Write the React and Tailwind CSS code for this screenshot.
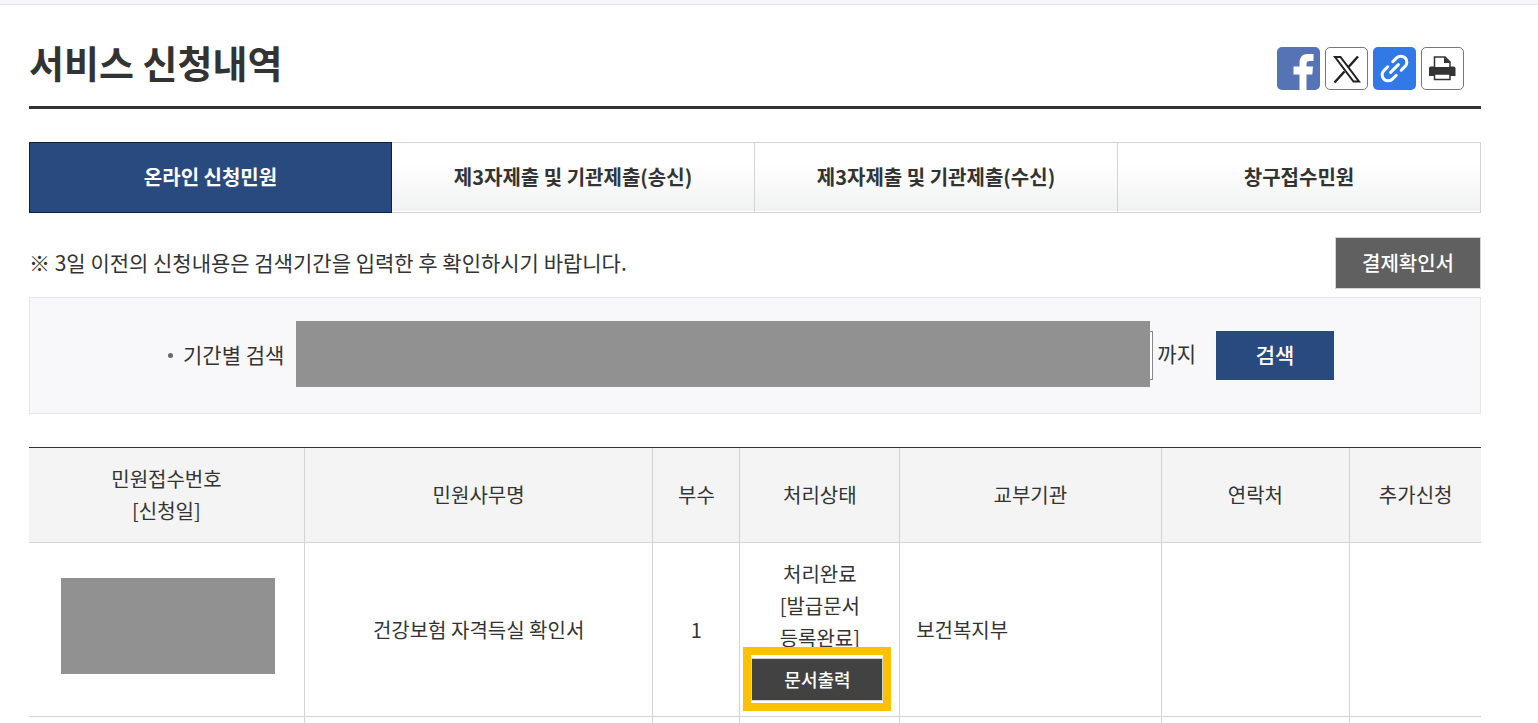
import { useState } from "react";

const tabs = [
  "온라인 신청민원",
  "제3자제출 및 기관제출(송신)",
  "제3자제출 및 기관제출(수신)",
  "창구접수민원",
];

const FacebookIcon = () => (
  <svg viewBox="0 0 43 43" className="size-full" aria-hidden="true">
    <path
      fill="#fff"
      d="M22.5 43V27.500H16.500V19.500H22.500V16.500C22.500 10 25.500 7 31 7H36.500V14H32.500C30.500 14 29.500 15 29.500 17V19.500H36L35.300 27.500H29.500V43Z"
    />
  </svg>
);

const XIcon = () => (
  <svg viewBox="0 0 41 41" className="size-full" aria-hidden="true">
    <path
      fill="none"
      stroke="#222"
      strokeWidth="2"
      d="M9 9H14.500L33 33.500H27.500Z"
    />
    <path
      fill="none"
      stroke="#222"
      strokeWidth="2.500"
      d="M32 8.500L22.500 19M18.500 23.500L8.500 34.500"
    />
  </svg>
);

const LinkIcon = () => (
  <svg viewBox="0 0 43 43" className="size-full" aria-hidden="true">
    <g
      transform="rotate(-45 21.5 21.5)"
      fill="none"
      stroke="#fff"
      strokeWidth="3"
      strokeLinecap="round"
    >
      <path d="M18 15.500H12.500A6 6 0 0 0 12.500 27.500H18" />
      <path d="M25 15.500H30.500A6 6 0 0 1 30.500 27.500H25" />
      <path d="M16 21.500H27" />
    </g>
  </svg>
);

const PrintIcon = () => (
  <svg viewBox="0 0 41 41" className="size-full" aria-hidden="true">
    <path
      fill="#333"
      d="M8.500 18.500H31.500Q33.500 18.500 33.500 20.500V28H7V20.500Q7 18.500 8.500 18.500Z"
    />
    <path fill="#fff" stroke="#333" strokeWidth="1.500" d="M12.500 19V9H23L28 14V19" />
    <path fill="#333" d="M22 9V15H28.500Z" />
    <path fill="#fff" stroke="#333" strokeWidth="1.500" d="M12.500 26H28V31.500H12.500Z" />
  </svg>
);

const shareButtons = [
  { label: "페이스북", icon: FacebookIcon, style: "bg-[#5674b5]" },
  { label: "X", icon: XIcon, style: "border border-[#777] bg-white" },
  { label: "링크 복사", icon: LinkIcon, style: "bg-[#3079e6]" },
  { label: "인쇄", icon: PrintIcon, style: "border border-[#777] bg-white" },
];

const columns = [
  { name: ["민원접수번호", "[신청일]"], width: "w-[19%]" },
  { name: ["민원사무명"], width: "w-[24%]" },
  { name: ["부수"], width: "w-[6%]" },
  { name: ["처리상태"], width: "w-[11%]" },
  { name: ["교부기관"], width: "w-[18%]" },
  { name: ["연락처"], width: "w-[13%]" },
  { name: ["추가신청"], width: "w-[9%]" },
];

const PageHeader = () => (
  <header className="flex items-end justify-between border-b-3 border-[#333] pt-7 pr-[17px] pb-4">
    <h1 className="text-[38px] leading-[57px] font-bold">서비스 신청내역</h1>
    <div className="flex gap-[5px]">
      {shareButtons.map(({ label, icon: Icon, style }) => (
        <button
          key={label}
          type="button"
          aria-label={label}
          className={`size-[43px] overflow-hidden rounded-[5px] ${style}`}
        >
          <Icon />
        </button>
      ))}
    </div>
  </header>
);

const SearchBox = () => (
  <form
    onSubmit={(e) => e.preventDefault()}
    className="mt-2 flex h-[117px] items-center border border-[#e5e6eb] bg-[#f8f8fb] pr-[146px] pl-[138px] text-[21px]"
  >
    <span className="mr-[10px] size-[5px] rounded-full bg-[#666]" />
    <label htmlFor="period" className="mr-3 pb-0.5">
      기간별 검색
    </label>
    <div className="relative flex-1">
      <input
        id="period"
        type="text"
        readOnly
        className="block h-[49px] w-full border border-[#888] bg-white"
      />
      {/* personal data stays hidden */}
      <div className="absolute -top-[10px] right-[3px] -bottom-[7px] left-0 bg-[#919191]" />
    </div>
    <span className="ml-1 pb-1">까지</span>
    <button
      type="submit"
      className="ml-5 h-[49px] w-[118px] bg-[#294a7e] pb-0.5 font-medium text-white"
    >
      검색
    </button>
  </form>
);

const ResultTable = () => (
  <table className="mt-[33px] w-full table-fixed border-separate border-spacing-0 border-t border-[#333] text-center text-[20px] leading-8">
    <thead>
      <tr>
        {columns.map(({ name, width }) => (
          <th
            key={name[0]}
            scope="col"
            className={`border-r border-b border-[#d3d3d3] bg-[#f4f4f4] py-[15px] font-normal last:border-r-0 ${width}`}
          >
            {name.map((line) => (
              <div key={line}>{line}</div>
            ))}
          </th>
        ))}
      </tr>
    </thead>
    <tbody>
      <tr className="*:border-r *:border-b *:border-[#d3d3d3] *:last:border-r-0">
        <td className="pb-2 pl-1">
          <div className="mx-auto h-24 w-[214px] bg-[#919191]" />
        </td>
        <td>건강보험 자격득실 확인서</td>
        <td>1</td>
        <td className="px-[11px] py-[15px]">
          <div>처리완료</div>
          <div>[발급문서</div>
          <div>등록완료]</div>
          <div className="relative mt-1 w-[132px]">
            <button
              type="button"
              className="block h-[43px] w-full border border-[#d3d3d3] bg-[#424242] pb-0.5 text-[18px] font-medium text-white"
            >
              문서출력
            </button>
            <div className="pointer-events-none absolute -inset-x-2 -top-[11px] -bottom-[10px] border-8 border-[#ffc000]" />
          </div>
        </td>
        <td className="pl-4 text-left">보건복지부</td>
        <td />
        <td />
      </tr>
      <tr className="*:h-1.5 *:border-r *:border-[#d3d3d3] *:last:border-r-0">
        {columns.map(({ name }) => (
          <td key={name[0]} />
        ))}
      </tr>
    </tbody>
  </table>
);

export default function App() {
  const [activeTab, setActiveTab] = useState(0);

  return (
    <div className="bg-white font-['Noto_Sans_CJK_KR',sans-serif] text-[#333]">
      <div className="h-[5px] border-b border-[#e8e4ea] bg-[#f5f7fb]" />
      <main className="pr-[57px] pl-[29px]">
        <PageHeader />

        <nav className="mt-[33px] grid grid-cols-4">
          {tabs.map((tab, i) => (
            <button
              key={tab}
              type="button"
              onClick={() => setActiveTab(i)}
              className={`h-[71px] pb-0.5 text-[20px] font-bold ${
                i === activeTab
                  ? "border border-[#0c2340] bg-[#294a7e] text-white"
                  : "border-y border-r border-[#d3d3d3] bg-linear-to-b from-white from-30% to-[#f0f1f1] shadow-[inset_0_-1px_0_#fff]"
              }`}
            >
              {tab}
            </button>
          ))}
        </nav>

        <div className="mt-6 flex items-center justify-between">
          <p className="text-[21px]">
            ※ 3일 이전의 신청내용은 검색기간을 입력한 후 확인하시기 바랍니다.
          </p>
          <button
            type="button"
            className="h-[52px] w-[146px] border border-[#d3d3d3] bg-[#606060] text-[20px] font-medium text-white"
          >
            결제확인서
          </button>
        </div>

        <SearchBox />
        <ResultTable />
      </main>
    </div>
  );
}
